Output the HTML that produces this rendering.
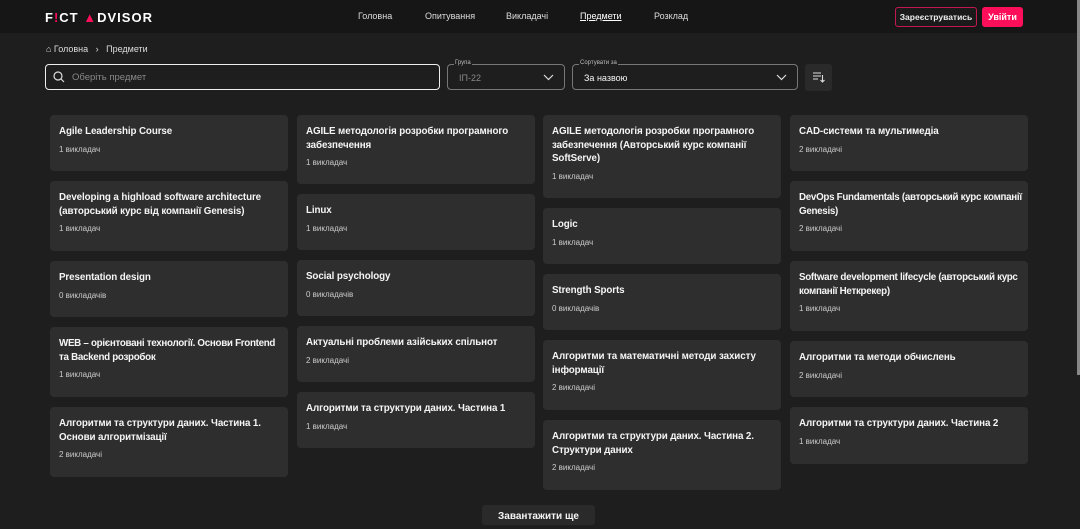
<!DOCTYPE html>
<html><head><meta charset="utf-8"><style>
*{box-sizing:border-box;margin:0;padding:0}
body{width:1080px;height:518px;overflow:hidden;background:#1e1e1e;font-family:"Liberation Sans",sans-serif;color:#f5f5f5;position:relative}
.hdr{position:absolute;left:0;top:0;width:1080px;height:33px;background:#161616}
.logo{position:absolute;left:45px;top:10px;font-weight:bold;font-size:13px;letter-spacing:1px;color:#fff}
.nav{position:absolute;top:11px;font-size:9px;color:#ddd}
.btn1{position:absolute;left:895px;top:7px;width:82px;height:20px;border:1px solid #c2184f;border-radius:3px;font-size:8.5px;font-weight:bold;color:#eee;text-align:center;line-height:18px;background:#1a1a1a}
.btn2{position:absolute;left:982px;top:7px;width:41px;height:20px;background:#ff0f5a;border-radius:3px;font-size:9px;font-weight:bold;color:#fff;text-align:center;line-height:20px}
.crumb{position:absolute;left:46px;top:44px;font-size:9px;color:#ddd}
.search{position:absolute;left:45px;top:64px;width:395px;height:26px;border:1.5px solid #eee;border-radius:4px}
.search span{position:absolute;left:26px;top:7px;font-size:9.5px;color:#888}
.sel{position:absolute;top:64px;height:26px;border:1px solid #777;border-radius:4px}
.sel .lb{position:absolute;left:6px;top:-5px;font-size:6px;color:#bbb;background:#1e1e1e;padding:0 1px}
.sel .v{position:absolute;left:11px;top:8px;font-size:9px}
.sel svg{position:absolute;right:10px;top:9px}
.sortb{position:absolute;left:805px;top:64px;width:27px;height:27px;background:#2a2a2a;border-radius:3px}
.col{position:absolute;top:115px;width:238px;display:flex;flex-direction:column;gap:10px}
.card{background:#2e2e2e;border-radius:4px;padding:10px 9px 0 9px;overflow:hidden}
.card h3{font-size:9.8px;font-weight:bold;line-height:13.5px;color:#f5f5f5;white-space:nowrap;letter-spacing:-0.1px}
.card p{font-size:8px;color:#ccc;margin-top:6px}
.more{position:absolute;left:482px;top:505px;width:113px;height:20px;background:#2a2a2a;border-radius:3px;font-size:10px;font-weight:bold;text-align:center;line-height:24px}
.sb{position:absolute;right:0;top:0;width:3px;height:375px;background:#888}
</style></head><body>
<div class="hdr">
<div class="logo">F<span style="color:#ff0f5a">!</span>CT <span style="color:#ff0f5a">▲</span>DVISOR</div>
<div class="nav" style="left:358px">Головна</div>
<div class="nav" style="left:425px">Опитування</div>
<div class="nav" style="left:506px">Викладачі</div>
<div class="nav" style="left:580px;color:#fff;text-decoration:underline">Предмети</div>
<div class="nav" style="left:654px">Розклад</div>
<div class="btn1">Зареєструватись</div>
<div class="btn2">Увійти</div>
</div>
<div class="crumb">⌂ Головна &nbsp;&nbsp;›&nbsp;&nbsp; Предмети</div>
<div class="search"><svg style="position:absolute;left:7px;top:6px" width="12" height="12" viewBox="0 0 12 12"><circle cx="5" cy="5" r="4" fill="none" stroke="#ddd" stroke-width="1.2"/><path d="M8 8l3 3" stroke="#ddd" stroke-width="1.2"/></svg><span>Оберіть предмет</span></div>
<div class="sel" style="left:447px;width:118px"><span class="lb">Група</span><span class="v" style="color:#888">ІП-22</span><svg width="11" height="7" viewBox="0 0 11 7"><path d="M1 1l4.5 4.5L10 1" fill="none" stroke="#ddd" stroke-width="1.2"/></svg></div>
<div class="sel" style="left:572px;width:226px"><span class="lb">Сортувати за</span><span class="v">За назвою</span><svg width="11" height="7" viewBox="0 0 11 7"><path d="M1 1l4.5 4.5L10 1" fill="none" stroke="#ddd" stroke-width="1.2"/></svg></div>
<div class="sortb"><svg style="position:absolute;left:8px;top:8px" width="12" height="11" viewBox="0 0 12 11"><path d="M0 1h8M0 4h8M0 7h5M9.5 3v7M7.5 8l2 2 2-2" fill="none" stroke="#ddd" stroke-width="1.1"/></svg></div>

<div class="col" style="left:50px">
<div class="card" style="height:56px"><h3>Agile Leadership Course</h3><p>1 викладач</p></div>
<div class="card" style="height:70px"><h3>Developing a highload software architecture<br>(авторський курс від компанії Genesis)</h3><p>1 викладач</p></div>
<div class="card" style="height:56px"><h3>Presentation design</h3><p>0 викладачів</p></div>
<div class="card" style="height:70px"><h3 style="letter-spacing:-0.3px">WEB – орієнтовані технології. Основи Frontend<br>та Backend розробок</h3><p>1 викладач</p></div>
<div class="card" style="height:70px"><h3>Алгоритми та структури даних. Частина 1.<br>Основи алгоритмізації</h3><p>2 викладачі</p></div>
</div>
<div class="col" style="left:297px">
<div class="card" style="height:69px"><h3>AGILE методологія розробки програмного<br>забезпечення</h3><p>1 викладач</p></div>
<div class="card" style="height:56px"><h3>Linux</h3><p>1 викладач</p></div>
<div class="card" style="height:56px"><h3>Social psychology</h3><p>0 викладачів</p></div>
<div class="card" style="height:56px"><h3>Актуальні проблеми азійських спільнот</h3><p>2 викладачі</p></div>
<div class="card" style="height:56px"><h3>Алгоритми та структури даних. Частина 1</h3><p>1 викладач</p></div>
</div>
<div class="col" style="left:543px">
<div class="card" style="height:83px"><h3>AGILE методологія розробки програмного<br>забезпечення (Авторський курс компанії<br>SoftServe)</h3><p>1 викладач</p></div>
<div class="card" style="height:56px"><h3>Logic</h3><p>1 викладач</p></div>
<div class="card" style="height:56px"><h3>Strength Sports</h3><p>0 викладачів</p></div>
<div class="card" style="height:70px"><h3>Алгоритми та математичні методи захисту<br>інформації</h3><p>2 викладачі</p></div>
<div class="card" style="height:70px"><h3>Алгоритми та структури даних. Частина 2.<br>Структури даних</h3><p>2 викладачі</p></div>
</div>
<div class="col" style="left:790px">
<div class="card" style="height:56px"><h3>CAD-системи та мультимедіа</h3><p>2 викладачі</p></div>
<div class="card" style="height:70px"><h3 style="letter-spacing:-0.3px">DevOps Fundamentals (авторський курс компанії<br>Genesis)</h3><p>2 викладачі</p></div>
<div class="card" style="height:70px"><h3 style="letter-spacing:-0.3px">Software development lifecycle (авторський курс<br>компанії Неткрекер)</h3><p>1 викладач</p></div>
<div class="card" style="height:56px"><h3>Алгоритми та методи обчислень</h3><p>2 викладачі</p></div>
<div class="card" style="height:57px"><h3>Алгоритми та структури даних. Частина 2</h3><p>1 викладач</p></div>
</div>
<div class="more">Завантажити ще</div>
<div class="sb"></div>
</body></html>
